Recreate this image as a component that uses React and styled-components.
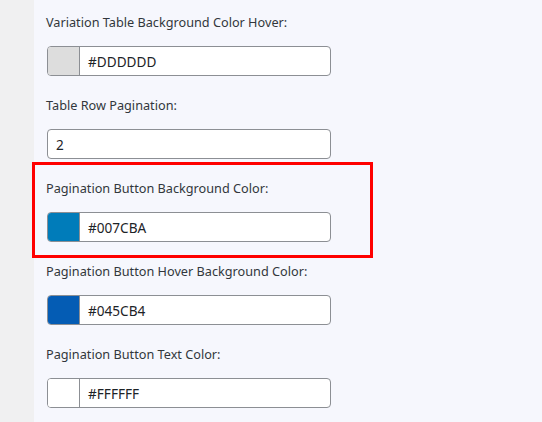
import React from "react";
import styled, { createGlobalStyle } from "styled-components";

const GlobalStyle = createGlobalStyle`
  html, body {
    margin: 0;
    padding: 0;
    background: #f6f7fd;
  }
  body {
    font-family: "Noto Sans", "Open Sans", sans-serif;
  }
`;

// ── Layout ──────────────────────────────────────────────────
const Page = styled.div`
  display: flex;
  min-height: 422px;
  width: 542px;
`;

const Sidebar = styled.div`
  width: 34px;
  flex-shrink: 0;
  background: #f0f0f1;
`;

const Main = styled.div`
  flex: 1;
  background: #f6f7fd;
  padding: 12px 0 0 13px;
  display: flex;
  flex-direction: column;
  gap: 19px;
`;

// ── Field ───────────────────────────────────────────────────
const Field = styled.div`
  position: relative;
  display: flex;
  flex-direction: column;
  gap: 14px;
  width: 284px;

  ${(p) =>
    p.$highlight &&
    `
    &::before {
      content: "";
      position: absolute;
      left: -15px;
      right: -42px;
      top: -16px;
      bottom: -16px;
      border: 3px solid #ff0000;
      pointer-events: none;
    }
  `}
`;

const Label = styled.label`
  font-size: 12.7px;
  line-height: 20px;
  color: #32373c;
  margin-left: -1px;
`;

const InputBox = styled.div`
  display: flex;
  height: 28px;
  border: 1px solid #8c8f94;
  border-radius: 4px;
  background: #fff;
  overflow: hidden;
`;

const Swatch = styled.span`
  width: 31px;
  flex-shrink: 0;
  background: ${(p) => p.$color};
  border-right: 1px solid #8c8f94;
`;

const Value = styled.span`
  flex: 1;
  display: flex;
  align-items: center;
  padding-left: 8px;
  font-size: 13.6px;
  color: #1d2327;
`;

const FIELDS = [
  { label: "Variation Table Background Color Hover:", value: "#DDDDDD", color: "#dddddd" },
  { label: "Table Row Pagination:", value: "2" },
  { label: "Pagination Button Background Color:", value: "#007CBA", color: "#007cba", highlight: true },
  { label: "Pagination Button Hover Background Color:", value: "#045CB4", color: "#045cb4" },
  { label: "Pagination Button Text Color:", value: "#FFFFFF", color: "#ffffff" },
];

const App = () => (
  <>
    <GlobalStyle />
    <Page>
      <Sidebar />
      <Main>
        {FIELDS.map((f) => (
          <Field key={f.label} $highlight={f.highlight}>
            <Label>{f.label}</Label>
            <InputBox>
              {f.color && <Swatch $color={f.color} />}
              <Value>{f.value}</Value>
            </InputBox>
          </Field>
        ))}
      </Main>
    </Page>
  </>
);

export default App;
